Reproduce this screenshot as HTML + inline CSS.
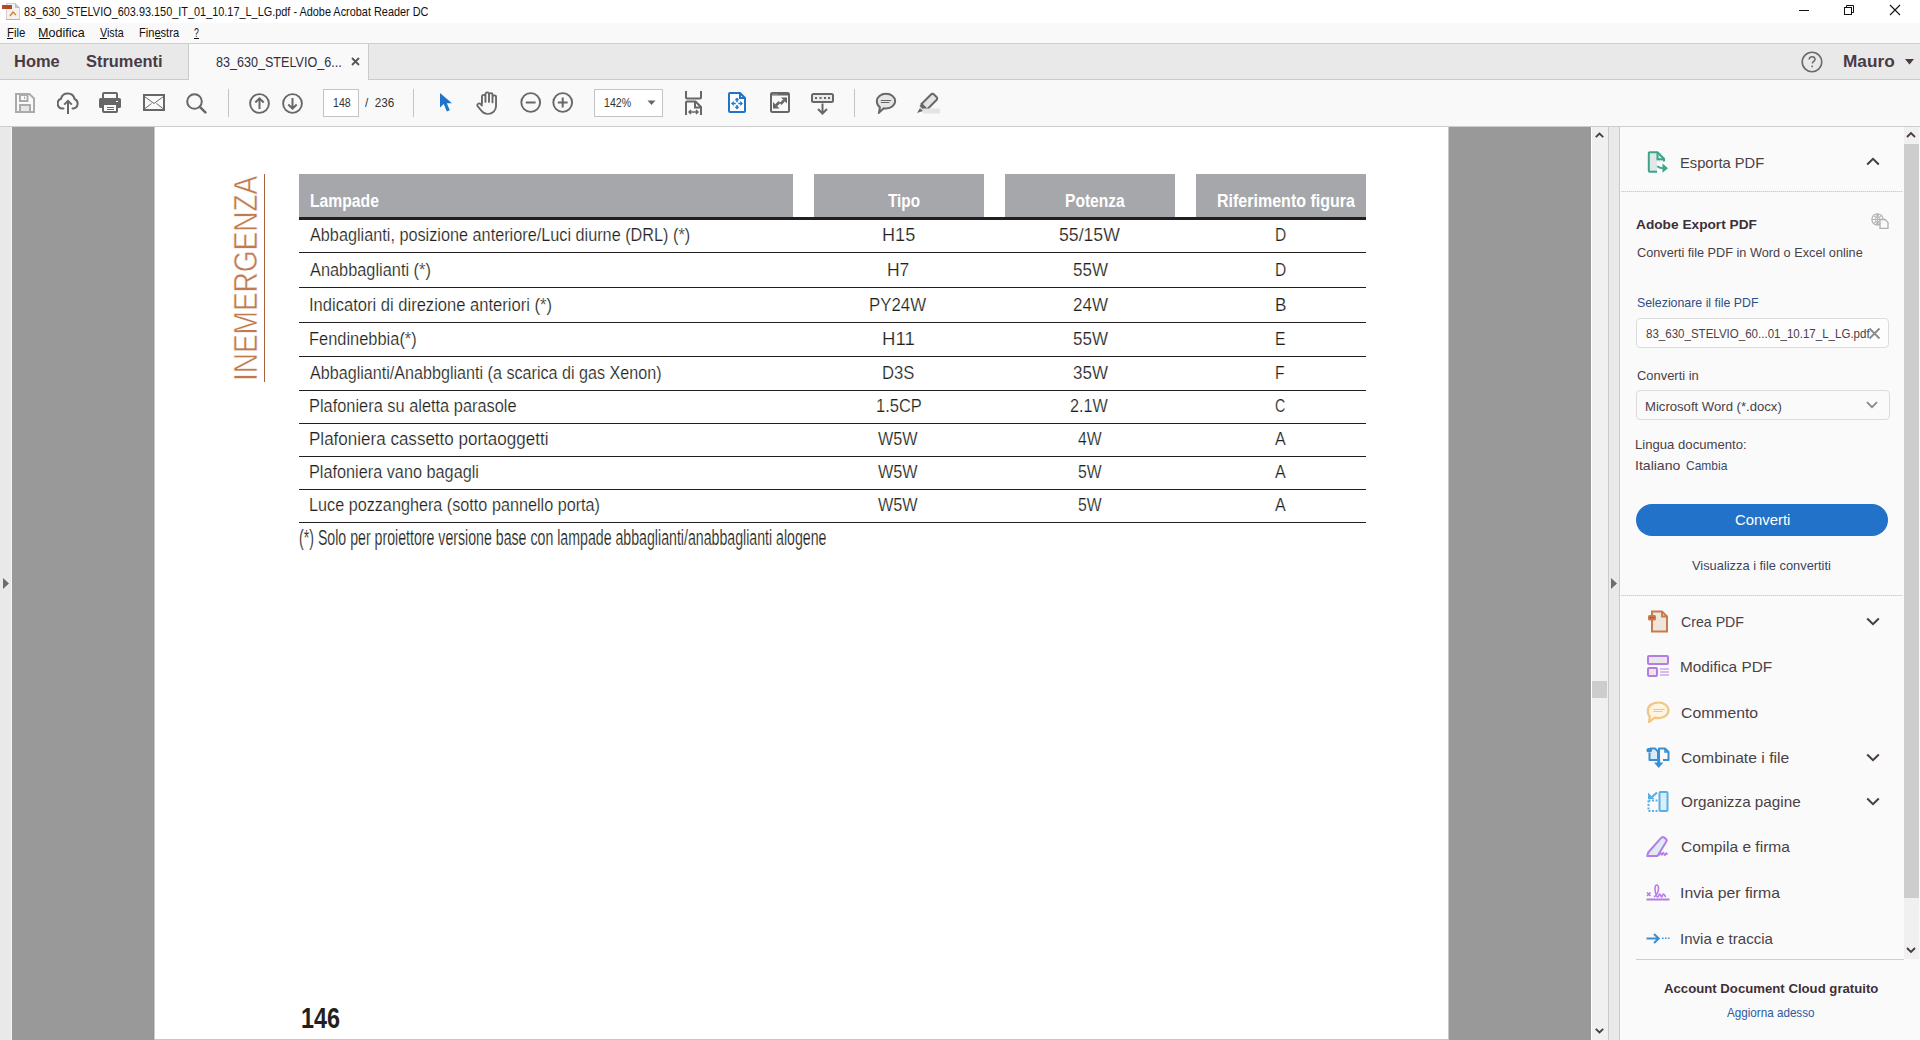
<!DOCTYPE html>
<html><head><meta charset="utf-8"><style>
html,body{margin:0;padding:0;width:1920px;height:1040px;overflow:hidden;background:#fff;position:relative}
.t{position:absolute;white-space:nowrap;line-height:1;transform-origin:0 0}
.r{position:absolute;display:block}
</style></head><body>
<div class="r" style="left:0px;top:0px;width:1920px;height:23px;background:#ffffff;"></div>
<svg class="r" style="left:2px;top:3px" width="18" height="17" viewBox="0 0 18 17"><path d="M4.5 0.5h9l4 4v12h-13z" fill="#f2f2f2" stroke="#d0d0d0"/><path d="M13.5 0.5v4h4" fill="#c8c8c8" stroke="#bdbdbd"/><rect x="0" y="2" width="10" height="4" fill="#b5482a"/><path d="M8 13 l3-4 l3 3" fill="none" stroke="#d9822b" stroke-width="1.4"/><rect x="4" y="16" width="14" height="1" fill="#b0b4bc"/></svg>
<div class="t" style="left:23.50px;top:6.00px;font-size:12.70px;color:#111;font-weight:normal;font-family:'Liberation Sans',sans-serif;transform:scale(0.8588,1.0000);">83_630_STELVIO_603.93.150_IT_01_10.17_L_LG.pdf - Adobe Acrobat Reader DC</div>
<div class="r" style="left:1799px;top:10px;width:10px;height:1px;background:#111;"></div>
<svg class="r" style="left:1843px;top:4px" width="12" height="12" viewBox="0 0 12 12"><rect x="1.5" y="3.5" width="7" height="7" fill="none" stroke="#111"/><path d="M3.5 3.5v-2h7v7h-2" fill="none" stroke="#111"/></svg>
<svg class="r" style="left:1889px;top:4px" width="12" height="12" viewBox="0 0 12 12"><path d="M1 1L11 11M11 1L1 11" stroke="#111" stroke-width="1.1"/></svg>
<div class="r" style="left:0px;top:23px;width:1920px;height:20px;background:#f9f9f9;"></div>
<div class="r" style="left:0px;top:43px;width:1920px;height:1px;background:#cdcdcd;"></div>
<div class="t" style="left:6.60px;top:27.00px;font-size:12.70px;color:#111;font-weight:normal;font-family:'Liberation Sans',sans-serif;transform:scale(0.9026,1.0000);">File</div>
<div class="r" style="left:7px;top:38px;width:6px;height:1px;background:#111;"></div>
<div class="t" style="left:38.01px;top:27.00px;font-size:12.70px;color:#111;font-weight:normal;font-family:'Liberation Sans',sans-serif;transform:scale(0.9876,1.0000);">Modifica</div>
<div class="r" style="left:39px;top:38px;width:11px;height:1px;background:#111;"></div>
<div class="t" style="left:100.00px;top:27.00px;font-size:12.70px;color:#111;font-weight:normal;font-family:'Liberation Sans',sans-serif;transform:scale(0.8437,1.0000);">Vista</div>
<div class="r" style="left:100px;top:38px;width:7px;height:1px;background:#111;"></div>
<div class="t" style="left:138.83px;top:27.00px;font-size:12.70px;color:#111;font-weight:normal;font-family:'Liberation Sans',sans-serif;transform:scale(0.8738,1.0000);">Finestra</div>
<div class="r" style="left:155px;top:38px;width:6px;height:1px;background:#111;"></div>
<div class="t" style="left:194.00px;top:27.00px;font-size:12.70px;color:#111;font-weight:normal;font-family:'Liberation Sans',sans-serif;transform:scale(0.6857,1.0000);">?</div>
<div class="r" style="left:194px;top:38px;width:5px;height:1px;background:#111;"></div>
<div class="r" style="left:0px;top:44px;width:1920px;height:35px;background:#e9e9e9;"></div>
<div class="r" style="left:0px;top:79px;width:1920px;height:1px;background:#cbcbcb;"></div>
<div class="r" style="left:188px;top:44px;width:1px;height:36px;background:#cbcbcb;"></div>
<div class="r" style="left:189px;top:44px;width:179px;height:36px;background:#f9f9f9;"></div>
<div class="r" style="left:368px;top:44px;width:1px;height:36px;background:#cbcbcb;"></div>
<div class="t" style="left:13.94px;top:54.00px;font-size:15.60px;color:#4a3a45;font-weight:bold;font-family:'Liberation Sans',sans-serif;transform:scale(1.0551,1.0000);">Home</div>
<div class="t" style="left:85.50px;top:54.00px;font-size:15.60px;color:#4a3a45;font-weight:bold;font-family:'Liberation Sans',sans-serif;transform:scale(1.0519,1.0000);">Strumenti</div>
<div class="t" style="left:215.60px;top:55.00px;font-size:14.80px;color:#2f2f3f;font-weight:normal;font-family:'Liberation Sans',sans-serif;transform:scale(0.8501,1.0000);">83_630_STELVIO_6...</div>
<svg class="r" style="left:351px;top:57px" width="9" height="9" viewBox="0 0 9 9"><path d="M1 1L8 8M8 1L1 8" stroke="#555" stroke-width="1.8"/></svg>
<svg class="r" style="left:1801px;top:51px" width="22" height="22" viewBox="0 0 22 22"><circle cx="11" cy="11" r="9.8" fill="none" stroke="#6a6a6a" stroke-width="1.6"/><path d="M8.2 8.6c0-1.7 1.3-2.8 2.9-2.8s2.9 1.1 2.9 2.6c0 1.9-2.6 2.1-2.6 4.1" fill="none" stroke="#6a6a6a" stroke-width="1.5"/><rect x="10.4" y="14.6" width="1.6" height="1.6" fill="#6a6a6a"/></svg>
<div class="t" style="left:1842.65px;top:54.00px;font-size:15.60px;color:#4a3a45;font-weight:bold;font-family:'Liberation Sans',sans-serif;transform:scale(1.1048,1.0000);">Mauro</div>
<svg class="r" style="left:1905px;top:59px" width="9" height="6" viewBox="0 0 9 6"><path d="M0 0h9l-4.5 5.5z" fill="#4a3a45"/></svg>
<div class="r" style="left:0px;top:80px;width:1920px;height:46px;background:#f9f9f9;"></div>
<div class="r" style="left:0px;top:126px;width:1920px;height:1px;background:#cdcdcd;"></div>
<svg class="r" style="left:15px;top:93px" width="20" height="20" viewBox="0 0 20 20"><path d="M1 1h13.5l4.5 4.5v13.5h-18z" fill="none" stroke="#ababab" stroke-width="2"/><rect x="5" y="2" width="7.5" height="6" fill="none" stroke="#ababab" stroke-width="2"/><rect x="9" y="3.5" width="1" height="2.5" fill="#ababab"/><rect x="5" y="12" width="10" height="7" fill="#e6e6e6" stroke="#ababab" stroke-width="2"/></svg>
<svg class="r" style="left:57px;top:92px" width="22" height="22" viewBox="0 0 22 22"><path d="M6.5 16.5h-1.2A5 5 0 0 1 4 6.8 A7 7 0 0 1 17.6 7 A5 5 0 0 1 16.6 16.5h-1.1" fill="none" stroke="#676767" stroke-width="2" stroke-linecap="round"/><path d="M11 22V9M7.2 12.6L11 8.8l3.8 3.8" fill="none" stroke="#676767" stroke-width="2"/></svg>
<svg class="r" style="left:99px;top:92px" width="22" height="21" viewBox="0 0 22 21"><rect x="4" y="1" width="14" height="6" rx="1" fill="none" stroke="#676767" stroke-width="2"/><rect x="0" y="6" width="22" height="10" rx="1.5" fill="#676767"/><rect x="4" y="12" width="14" height="8" rx="1" fill="#fff" stroke="#676767" stroke-width="2"/><rect x="8" y="15" width="7" height="1" fill="#676767"/><rect x="8" y="17" width="7" height="1" fill="#676767"/><rect x="17" y="9" width="2" height="1" fill="#fff"/></svg>
<svg class="r" style="left:143px;top:94px" width="22" height="17" viewBox="0 0 22 17"><rect x="1" y="1" width="20" height="15" fill="none" stroke="#676767" stroke-width="2"/><path d="M1.5 2.5l9.5 7 9.5-7M1.5 15l7-5.5M20.5 15l-7-5.5" fill="none" stroke="#676767" stroke-width="1"/></svg>
<svg class="r" style="left:186px;top:93px" width="21" height="21" viewBox="0 0 21 21"><circle cx="8.5" cy="8.5" r="7.3" fill="none" stroke="#676767" stroke-width="2"/><path d="M13.8 13.8l5.6 5.6" stroke="#676767" stroke-width="2.4" stroke-linecap="round"/></svg>
<div class="r" style="left:228px;top:89px;width:1px;height:28px;background:#c4c4c4;"></div>
<svg class="r" style="left:249px;top:93px" width="22" height="21" viewBox="0 0 22 21"><circle cx="10.5" cy="10.5" r="9.4" fill="none" stroke="#676767" stroke-width="1.9"/><path d="M10.5 16V5.5M6.3 9.5l4.2-4.2 4.2 4.2" fill="none" stroke="#676767" stroke-width="2"/></svg>
<svg class="r" style="left:282px;top:93px" width="21" height="21" viewBox="0 0 21 21"><circle cx="10.5" cy="10.5" r="9.4" fill="none" stroke="#676767" stroke-width="1.9"/><path d="M10.5 5v10.5M6.3 11.5l4.2 4.2 4.2-4.2" fill="none" stroke="#676767" stroke-width="2"/></svg>
<div class="r" style="left:323px;top:89px;width:36px;height:28px;background:#ffffff;box-sizing:border-box;border:1px solid #c4c4c4"></div>
<div class="t" style="left:332.50px;top:95.95px;font-size:13.00px;color:#333;font-weight:normal;font-family:'Liberation Sans',sans-serif;transform:scale(0.8155,1.0000);">148</div>
<div class="t" style="left:365.00px;top:95.95px;font-size:13.00px;color:#333;font-weight:normal;font-family:'Liberation Sans',sans-serif;transform:scale(0.8980,1.0000);">/&nbsp; 236</div>
<div class="r" style="left:413px;top:89px;width:1px;height:28px;background:#c4c4c4;"></div>
<svg class="r" style="left:439px;top:92px" width="14" height="21" viewBox="0 0 14 21"><path d="M1 1v14.5l3.8-3.5 3 7.5 3-1.3-3-7h5.2z" fill="#1f73c8"/></svg>
<svg class="r" style="left:476px;top:91px" width="24" height="24" viewBox="0 0 24 24"><g transform="translate(-1.2,0) scale(1.1,1)"><path d="M6.5 13V5.5a1.6 1.6 0 0 1 3.2 0V11M9.7 11V3a1.6 1.6 0 0 1 3.2 0v8M12.9 11V3.8a1.6 1.6 0 0 1 3.2 0V11.5M16.1 11.5V6a1.6 1.6 0 0 1 3.2 0v9c0 4.5-3 8-7.5 8-3 0-4.6-1.5-6-3.5L2.5 15a1.7 1.7 0 0 1 2.6-2.1l1.4 1.6" fill="none" stroke="#676767" stroke-width="1.7" stroke-linecap="round" stroke-linejoin="round"/></g></svg>
<svg class="r" style="left:520px;top:92px" width="22" height="21" viewBox="0 0 22 21"><circle cx="10.7" cy="10.5" r="9.4" fill="none" stroke="#676767" stroke-width="1.9"/><path d="M5.8 10.5h9.8" stroke="#676767" stroke-width="2"/></svg>
<svg class="r" style="left:552px;top:92px" width="22" height="21" viewBox="0 0 22 21"><circle cx="10.7" cy="10.5" r="9.4" fill="none" stroke="#676767" stroke-width="1.9"/><path d="M5.8 10.5h9.8M10.7 5.6v9.8" stroke="#676767" stroke-width="2"/></svg>
<div class="r" style="left:594px;top:89px;width:69px;height:28px;background:#ffffff;box-sizing:border-box;border:1px solid #c4c4c4"></div>
<div class="t" style="left:603.60px;top:95.95px;font-size:13.00px;color:#333;font-weight:normal;font-family:'Liberation Sans',sans-serif;transform:scale(0.8133,1.0000);">142%</div>
<svg class="r" style="left:647px;top:100px" width="9" height="6" viewBox="0 0 9 6"><path d="M0.5 0.5h8l-4 4.5z" fill="#676767"/></svg>
<svg class="r" style="left:684px;top:91px" width="19" height="25" viewBox="0 0 19 25"><path d="M2 0v6.5a1 1 0 0 0 1 1h13a1 1 0 0 0 1-1V0" fill="none" stroke="#676767" stroke-width="2"/><path d="M2 24V11.5a1 1 0 0 1 1-1h8.5l5.5 5.5v8" fill="none" stroke="#676767" stroke-width="2"/><path d="M11 11v5.5h5.5" fill="none" stroke="#676767" stroke-width="2"/><path d="M5 21h9M7 19l-2 2 2 2M12 19l2 2-2 2" fill="none" stroke="#676767" stroke-width="1.5"/></svg>
<svg class="r" style="left:728px;top:92px" width="18" height="21" viewBox="0 0 18 21"><path d="M2 1h10l5 5v13a1 1 0 0 1-1 1H2a1 1 0 0 1-1-1V2a1 1 0 0 1 1-1z" fill="#fff" stroke="#1f73c8" stroke-width="2"/><path d="M12 1v5h5" fill="none" stroke="#1f73c8" stroke-width="2"/><path d="M9 8v2.2M9 13v2.2M5.5 11.5h2.2M10.3 11.5h2.2" stroke="#1f73c8" stroke-width="1.5"/><path d="M9 5.5l-2.5 2.8h5zM9 17.5l-2.5-2.8h5zM3 11.5l2.8-2.5v5zM15 11.5l-2.8-2.5v5z" fill="#1f73c8"/></svg>
<svg class="r" style="left:770px;top:92px" width="20" height="21" viewBox="0 0 20 21"><rect x="1" y="1" width="18" height="19" rx="1.5" fill="none" stroke="#676767" stroke-width="2"/><rect x="1" y="1" width="18" height="2.5" fill="#676767"/><rect x="2.5" y="1.8" width="1" height="1" fill="#bbb"/><rect x="4.5" y="1.8" width="1" height="1" fill="#bbb"/><rect x="6.5" y="1.8" width="1" height="1" fill="#bbb"/><path d="M11 5.5h6v6zM3 10v6.5h6.5z" fill="#676767"/><path d="M14 8.5l-3.5 3.5M6 13.5l3.5-3.5" stroke="#676767" stroke-width="2.6"/></svg>
<svg class="r" style="left:811px;top:93px" width="23" height="22" viewBox="0 0 23 22"><rect x="1" y="1" width="21" height="8" rx="1.5" fill="#ebebeb" stroke="#676767" stroke-width="2"/><rect x="4" y="4" width="2" height="2" fill="#676767"/><rect x="8.5" y="4" width="2" height="2" fill="#676767"/><rect x="13" y="4" width="2" height="2" fill="#676767"/><rect x="17" y="4" width="2" height="2" fill="#676767"/><path d="M11.5 10.5v10M7 16l4.5 4.5L16 16" fill="none" stroke="#676767" stroke-width="2"/></svg>
<div class="r" style="left:854px;top:89px;width:1px;height:28px;background:#c4c4c4;"></div>
<svg class="r" style="left:875px;top:92px" width="22" height="22" viewBox="0 0 22 22"><path d="M11 1.8c5.2 0 9.2 3.2 9.2 7.3s-4 7.3-9.2 7.3c-0.8 0-1.5-0.1-2.2-0.2L4 20.6l0.9-5.3C2.9 14 1.8 11.8 1.8 9.1 1.8 5 5.8 1.8 11 1.8z" fill="#e8e6e4" stroke="#676767" stroke-width="2"/><path d="M5.8 8.5h10.4M5.8 10.5h8.6" stroke="#676767" stroke-width="1"/></svg>
<svg class="r" style="left:917px;top:92px" width="23" height="22" viewBox="0 0 23 22"><path d="M14 2.5a2 2 0 0 1 3 0l2.5 2.5a2 2 0 0 1 0 3L10 17.5l-5.5-5.5z" fill="#e6e4e2" stroke="#676767" stroke-width="2"/><path d="M4.5 12l5.5 5.5-2 2-5.5-5.5z" fill="#676767"/><path d="M0 21l3-5 3 3z" fill="#676767"/><rect x="6" y="16.5" width="17" height="5" fill="#e6e4e2"/></svg>
<div class="r" style="left:0px;top:127px;width:1920px;height:913px;background:#999999;"></div>
<div class="r" style="left:0px;top:127px;width:11px;height:913px;background:#e9e9e9;"></div>
<div class="r" style="left:11px;top:127px;width:1px;height:913px;background:#f5f5f5;"></div>
<svg class="r" style="left:3px;top:578px" width="6" height="11" viewBox="0 0 6 11"><path d="M0 0L6 5.5 0 11z" fill="#6c6c6c"/></svg>
<div class="r" style="left:154px;top:127px;width:1295px;height:912px;background:#ffffff;"></div>
<div class="r" style="left:154px;top:1039px;width:1295px;height:1px;background:#c6c6c6;"></div>
<div class="r" style="left:153px;top:127px;width:1px;height:913px;background:#959595;"></div>
<div class="r" style="left:154px;top:127px;width:1px;height:912px;background:#cbcbcb;"></div>
<div class="r" style="left:1448px;top:127px;width:1px;height:912px;background:#c8c8c8;"></div>
<div class="r" style="left:1591px;top:127px;width:1px;height:913px;background:#ffffff;"></div>
<div class="r" style="left:1592px;top:127px;width:16px;height:913px;background:#f0f0f0;"></div>
<div class="r" style="left:1608px;top:127px;width:1px;height:913px;background:#cacaca;"></div>
<div class="r" style="left:1609px;top:127px;width:10px;height:913px;background:#e9e9e9;"></div>
<div class="r" style="left:1619px;top:127px;width:1px;height:913px;background:#cacaca;"></div>
<div class="r" style="left:1592px;top:681px;width:15px;height:17px;background:#cdcdcd;"></div>
<svg class="r" style="left:1595px;top:132px" width="9" height="6" viewBox="0 0 9 6"><path d="M0.8 5.2L4.5 1.5 8.2 5.2" fill="none" stroke="#4a3a42" stroke-width="1.8"/></svg>
<svg class="r" style="left:1595px;top:1028px" width="9" height="6" viewBox="0 0 9 6"><path d="M0.8 0.8L4.5 4.5 8.2 0.8" fill="none" stroke="#4a3a42" stroke-width="1.8"/></svg>
<svg class="r" style="left:1611px;top:578px" width="6" height="11" viewBox="0 0 6 11"><path d="M0 0L6 5.5 0 11z" fill="#6c6c6c"/></svg>
<div class="r" style="left:1620px;top:127px;width:300px;height:913px;background:#fafafa;"></div>
<div class="r" style="left:299px;top:174px;width:494px;height:43px;background:#a6a7ab;"></div>
<div class="r" style="left:814px;top:174px;width:170px;height:43px;background:#a6a7ab;"></div>
<div class="r" style="left:1005px;top:174px;width:170px;height:43px;background:#a6a7ab;"></div>
<div class="r" style="left:1196px;top:174px;width:170px;height:43px;background:#a6a7ab;"></div>
<div class="r" style="left:299px;top:217px;width:1067px;height:3px;background:#231f20;"></div>
<div class="t" style="left:309.50px;top:193.00px;font-size:17.50px;color:#fff;font-weight:bold;font-family:'Liberation Sans',sans-serif;transform:scale(0.8963,1.0000);">Lampade</div>
<div class="t" style="left:888.40px;top:193.00px;font-size:17.50px;color:#fff;font-weight:bold;font-family:'Liberation Sans',sans-serif;transform:scale(0.8740,1.0000);">Tipo</div>
<div class="t" style="left:1064.71px;top:193.00px;font-size:17.50px;color:#fff;font-weight:bold;font-family:'Liberation Sans',sans-serif;transform:scale(0.8906,1.0000);">Potenza</div>
<div class="t" style="left:1216.78px;top:193.00px;font-size:17.50px;color:#fff;font-weight:bold;font-family:'Liberation Sans',sans-serif;transform:scale(0.9155,1.0000);">Riferimento figura</div>
<div class="r" style="left:299px;top:252px;width:1067px;height:1px;background:#231f20;"></div>
<div class="r" style="left:299px;top:287px;width:1067px;height:1px;background:#231f20;"></div>
<div class="r" style="left:299px;top:322px;width:1067px;height:1px;background:#231f20;"></div>
<div class="r" style="left:299px;top:356px;width:1067px;height:1px;background:#231f20;"></div>
<div class="r" style="left:299px;top:390px;width:1067px;height:1px;background:#231f20;"></div>
<div class="r" style="left:299px;top:423px;width:1067px;height:1px;background:#231f20;"></div>
<div class="r" style="left:299px;top:456px;width:1067px;height:1px;background:#231f20;"></div>
<div class="r" style="left:299px;top:489px;width:1067px;height:1px;background:#231f20;"></div>
<div class="r" style="left:299px;top:522px;width:1067px;height:1px;background:#231f20;"></div>
<div class="t" style="left:310.40px;top:227.00px;font-size:17.50px;color:#231f20;font-weight:normal;font-family:'Liberation Sans',sans-serif;transform:scale(0.9283,1.0000);-webkit-text-stroke:0.2px #fff;">Abbaglianti, posizione anteriore/Luci diurne (DRL) (*)</div>
<div class="t" style="left:882.27px;top:227.00px;font-size:17.50px;color:#231f20;font-weight:normal;font-family:'Liberation Sans',sans-serif;transform:scale(1.0339,1.0000);-webkit-text-stroke:0.2px #fff;">H15</div>
<div class="t" style="left:1059.00px;top:227.00px;font-size:17.50px;color:#231f20;font-weight:normal;font-family:'Liberation Sans',sans-serif;transform:scale(1.0083,1.0000);-webkit-text-stroke:0.2px #fff;">55/15W</div>
<div class="t" style="left:1275.11px;top:227.00px;font-size:17.50px;color:#231f20;font-weight:normal;font-family:'Liberation Sans',sans-serif;transform:scale(0.8909,1.0000);-webkit-text-stroke:0.2px #fff;">D</div>
<div class="t" style="left:310.40px;top:262.00px;font-size:17.50px;color:#231f20;font-weight:normal;font-family:'Liberation Sans',sans-serif;transform:scale(0.9342,1.0000);-webkit-text-stroke:0.2px #fff;">Anabbaglianti (*)</div>
<div class="t" style="left:887.00px;top:262.00px;font-size:17.50px;color:#231f20;font-weight:normal;font-family:'Liberation Sans',sans-serif;transform:scale(0.9982,1.0000);-webkit-text-stroke:0.2px #fff;">H7</div>
<div class="t" style="left:1072.60px;top:262.00px;font-size:17.50px;color:#231f20;font-weight:normal;font-family:'Liberation Sans',sans-serif;transform:scale(0.9708,1.0000);-webkit-text-stroke:0.2px #fff;">55W</div>
<div class="t" style="left:1275.11px;top:262.00px;font-size:17.50px;color:#231f20;font-weight:normal;font-family:'Liberation Sans',sans-serif;transform:scale(0.8909,1.0000);-webkit-text-stroke:0.2px #fff;">D</div>
<div class="t" style="left:309.45px;top:297.00px;font-size:17.50px;color:#231f20;font-weight:normal;font-family:'Liberation Sans',sans-serif;transform:scale(0.9460,1.0000);-webkit-text-stroke:0.2px #fff;">Indicatori di direzione anteriori (*)</div>
<div class="t" style="left:869.34px;top:297.00px;font-size:17.50px;color:#231f20;font-weight:normal;font-family:'Liberation Sans',sans-serif;transform:scale(0.9624,1.0000);-webkit-text-stroke:0.2px #fff;">PY24W</div>
<div class="t" style="left:1072.60px;top:297.00px;font-size:17.50px;color:#231f20;font-weight:normal;font-family:'Liberation Sans',sans-serif;transform:scale(0.9708,1.0000);-webkit-text-stroke:0.2px #fff;">24W</div>
<div class="t" style="left:1275.02px;top:297.00px;font-size:17.50px;color:#231f20;font-weight:normal;font-family:'Liberation Sans',sans-serif;transform:scale(0.9800,1.0000);-webkit-text-stroke:0.2px #fff;">B</div>
<div class="t" style="left:309.46px;top:331.00px;font-size:17.50px;color:#231f20;font-weight:normal;font-family:'Liberation Sans',sans-serif;transform:scale(0.9383,1.0000);-webkit-text-stroke:0.2px #fff;">Fendinebbia(*)</div>
<div class="t" style="left:882.34px;top:331.00px;font-size:17.50px;color:#231f20;font-weight:normal;font-family:'Liberation Sans',sans-serif;transform:scale(1.0629,1.0000);-webkit-text-stroke:0.2px #fff;">H11</div>
<div class="t" style="left:1072.60px;top:331.00px;font-size:17.50px;color:#231f20;font-weight:normal;font-family:'Liberation Sans',sans-serif;transform:scale(0.9708,1.0000);-webkit-text-stroke:0.2px #fff;">55W</div>
<div class="t" style="left:1275.10px;top:331.00px;font-size:17.50px;color:#231f20;font-weight:normal;font-family:'Liberation Sans',sans-serif;transform:scale(0.9000,1.0000);-webkit-text-stroke:0.2px #fff;">E</div>
<div class="t" style="left:310.40px;top:365.00px;font-size:17.50px;color:#231f20;font-weight:normal;font-family:'Liberation Sans',sans-serif;transform:scale(0.9219,1.0000);-webkit-text-stroke:0.2px #fff;">Abbaglianti/Anabbglianti (a scarica di gas Xenon)</div>
<div class="t" style="left:882.05px;top:365.00px;font-size:17.50px;color:#231f20;font-weight:normal;font-family:'Liberation Sans',sans-serif;transform:scale(0.9515,1.0000);-webkit-text-stroke:0.2px #fff;">D3S</div>
<div class="t" style="left:1072.60px;top:365.00px;font-size:17.50px;color:#231f20;font-weight:normal;font-family:'Liberation Sans',sans-serif;transform:scale(0.9708,1.0000);-webkit-text-stroke:0.2px #fff;">35W</div>
<div class="t" style="left:1275.11px;top:365.00px;font-size:17.50px;color:#231f20;font-weight:normal;font-family:'Liberation Sans',sans-serif;transform:scale(0.8889,1.0000);-webkit-text-stroke:0.2px #fff;">F</div>
<div class="t" style="left:309.46px;top:398.00px;font-size:17.50px;color:#231f20;font-weight:normal;font-family:'Liberation Sans',sans-serif;transform:scale(0.9360,1.0000);-webkit-text-stroke:0.2px #fff;">Plafoniera su aletta parasole</div>
<div class="t" style="left:876.26px;top:398.00px;font-size:17.50px;color:#231f20;font-weight:normal;font-family:'Liberation Sans',sans-serif;transform:scale(0.9411,1.0000);-webkit-text-stroke:0.2px #fff;">1.5CP</div>
<div class="t" style="left:1070.40px;top:398.00px;font-size:17.50px;color:#231f20;font-weight:normal;font-family:'Liberation Sans',sans-serif;transform:scale(0.9243,1.0000);-webkit-text-stroke:0.2px #fff;">2.1W</div>
<div class="t" style="left:1275.20px;top:398.00px;font-size:17.50px;color:#231f20;font-weight:normal;font-family:'Liberation Sans',sans-serif;transform:scale(0.8167,1.0000);-webkit-text-stroke:0.2px #fff;">C</div>
<div class="t" style="left:309.43px;top:431.00px;font-size:17.50px;color:#231f20;font-weight:normal;font-family:'Liberation Sans',sans-serif;transform:scale(0.9728,1.0000);-webkit-text-stroke:0.2px #fff;">Plafoniera cassetto portaoggetti</div>
<div class="t" style="left:878.30px;top:431.00px;font-size:17.50px;color:#231f20;font-weight:normal;font-family:'Liberation Sans',sans-serif;transform:scale(0.9272,1.0000);-webkit-text-stroke:0.2px #fff;">W5W</div>
<div class="t" style="left:1077.70px;top:431.00px;font-size:17.50px;color:#231f20;font-weight:normal;font-family:'Liberation Sans',sans-serif;transform:scale(0.9015,1.0000);-webkit-text-stroke:0.2px #fff;">4W</div>
<div class="t" style="left:1274.80px;top:431.00px;font-size:17.50px;color:#231f20;font-weight:normal;font-family:'Liberation Sans',sans-serif;transform:scale(0.9167,1.0000);-webkit-text-stroke:0.2px #fff;">A</div>
<div class="t" style="left:309.47px;top:464.00px;font-size:17.50px;color:#231f20;font-weight:normal;font-family:'Liberation Sans',sans-serif;transform:scale(0.9292,1.0000);-webkit-text-stroke:0.2px #fff;">Plafoniera vano bagagli</div>
<div class="t" style="left:878.30px;top:464.00px;font-size:17.50px;color:#231f20;font-weight:normal;font-family:'Liberation Sans',sans-serif;transform:scale(0.9272,1.0000);-webkit-text-stroke:0.2px #fff;">W5W</div>
<div class="t" style="left:1077.70px;top:464.00px;font-size:17.50px;color:#231f20;font-weight:normal;font-family:'Liberation Sans',sans-serif;transform:scale(0.9015,1.0000);-webkit-text-stroke:0.2px #fff;">5W</div>
<div class="t" style="left:1274.80px;top:464.00px;font-size:17.50px;color:#231f20;font-weight:normal;font-family:'Liberation Sans',sans-serif;transform:scale(0.9167,1.0000);-webkit-text-stroke:0.2px #fff;">A</div>
<div class="t" style="left:309.47px;top:497.00px;font-size:17.50px;color:#231f20;font-weight:normal;font-family:'Liberation Sans',sans-serif;transform:scale(0.9260,1.0000);-webkit-text-stroke:0.2px #fff;">Luce pozzanghera (sotto pannello porta)</div>
<div class="t" style="left:878.30px;top:497.00px;font-size:17.50px;color:#231f20;font-weight:normal;font-family:'Liberation Sans',sans-serif;transform:scale(0.9272,1.0000);-webkit-text-stroke:0.2px #fff;">W5W</div>
<div class="t" style="left:1077.70px;top:497.00px;font-size:17.50px;color:#231f20;font-weight:normal;font-family:'Liberation Sans',sans-serif;transform:scale(0.9015,1.0000);-webkit-text-stroke:0.2px #fff;">5W</div>
<div class="t" style="left:1274.80px;top:497.00px;font-size:17.50px;color:#231f20;font-weight:normal;font-family:'Liberation Sans',sans-serif;transform:scale(0.9167,1.0000);-webkit-text-stroke:0.2px #fff;">A</div>
<div class="t" style="left:298.73px;top:527.00px;font-size:21.20px;color:#231f20;font-weight:normal;font-family:'Liberation Sans',sans-serif;transform:scale(0.6684,1.0000);-webkit-text-stroke:0.2px #fff;">(*) Solo per proiettore versione base con lampade abbaglianti/anabbaglianti alogene</div>
<div class="t" style="left:233.5px;top:379px;width:0;height:0"><div style="position:absolute;left:0;top:0;transform-origin:0 0;transform:rotate(-90deg)">
<div class="t" style="left:-1.73px;top:-4.00px;font-size:32.30px;color:#c07a50;font-weight:normal;font-family:'Liberation Sans',sans-serif;transform:scale(0.8660,1.0000);-webkit-text-stroke:0.5px #fff;">INEMERGENZA</div>
</div></div>
<div class="r" style="left:264px;top:174px;width:1px;height:208px;background:#a8603f;"></div>
<div class="t" style="left:301.48px;top:1004.00px;font-size:28.60px;color:#231f20;font-weight:bold;font-family:'Liberation Sans',sans-serif;transform:scale(0.8187,1.0000);">146</div>
<svg class="r" style="left:1647px;top:151px" width="22" height="22" viewBox="0 0 22 22"><path d="M2.8 1.2H10.5L17 7.7V10.5H10V14.5L10 20.8H2.8a1 1 0 0 1-1-1V2.2a1 1 0 0 1 1-1z" fill="#e2e6e6"/><path d="M10 20.8H2.8a1 1 0 0 1-1-1V2.2a1 1 0 0 1 1-1H10.5L17 7.7V10.5" fill="none" stroke="#3aa58a" stroke-width="2"/><path d="M10.5 1.5V8.2H17" fill="none" stroke="#3aa58a" stroke-width="2"/><path d="M10.3 15.2c1.2 1.4 2.6 2 5.5 2" fill="none" stroke="#3aa58a" stroke-width="2"/><path d="M15.5 12.6L21 17.2 15.5 21.8z" fill="#3aa58a"/></svg>
<div class="t" style="left:1679.52px;top:155.00px;font-size:15.00px;color:#4a4147;font-weight:normal;font-family:'Liberation Sans',sans-serif;transform:scale(0.9811,1.0000);">Esporta PDF</div>
<svg class="r" style="left:1866px;top:157px" width="14" height="9" viewBox="0 0 14 9"><path d="M1.2 7.5L7 1.8l5.8 5.7" fill="none" stroke="#4a3a42" stroke-width="2"/></svg>
<div class="r" style="left:1621px;top:191px;width:282px;height:1px;background:repeating-linear-gradient(90deg,#cdcdcd 0 1px,#e6e6e6 1px 2px)"></div>
<div class="t" style="left:1636.00px;top:218.00px;font-size:13.00px;color:#3f2f38;font-weight:bold;font-family:'Liberation Sans',sans-serif;transform:scale(1.0531,1.0000);">Adobe Export PDF</div>
<svg class="r" style="left:1871px;top:213px" width="18" height="16" viewBox="0 0 18 16"><circle cx="6.5" cy="6.5" r="5.6" fill="none" stroke="#b0b0b0" stroke-width="1.2"/><path d="M1 6.5h11M6.5 1v11M3 3.5c2 1 5 1 7 0M3 9.5c2-1 5-1 7 0M6.5 1c-2.5 3-2.5 8 0 11M6.5 1c2.5 3 2.5 8 0 11" fill="none" stroke="#b0b0b0" stroke-width="0.9"/><path d="M9 6.5h5l3 3v6h-8z" fill="#fafafa" stroke="#b0b0b0" stroke-width="1.3"/></svg>
<div class="t" style="left:1636.50px;top:246.00px;font-size:13.00px;color:#4a4147;font-weight:normal;font-family:'Liberation Sans',sans-serif;transform:scale(0.9773,1.0000);">Converti file PDF in Word o Excel online</div>
<div class="t" style="left:1636.50px;top:296.00px;font-size:13.00px;color:#2f4f85;font-weight:normal;font-family:'Liberation Sans',sans-serif;transform:scale(0.9496,1.0000);">Selezionare il file PDF</div>
<div class="r" style="left:1636px;top:318px;width:253px;height:30px;background:#fdfdfd;box-sizing:border-box;border:1px solid #dcdcdc;border-radius:4px"></div>
<div class="t" style="left:1646.00px;top:327.00px;font-size:13.00px;color:#4a4147;font-weight:normal;font-family:'Liberation Sans',sans-serif;transform:scale(0.8875,1.0000);">83_630_STELVIO_60...01_10.17_L_LG.pdf</div>
<svg class="r" style="left:1868px;top:327px" width="13" height="13" viewBox="0 0 13 13"><path d="M1.5 1.5l10 10M11.5 1.5l-10 10" stroke="#8a8a8a" stroke-width="1.8"/></svg>
<div class="t" style="left:1636.50px;top:369.00px;font-size:13.00px;color:#4a4147;font-weight:normal;font-family:'Liberation Sans',sans-serif;transform:scale(0.9934,1.0000);">Converti in</div>
<div class="r" style="left:1636px;top:390px;width:254px;height:30px;background:#fafafa;box-sizing:border-box;border:1px solid #dcdcdc;border-radius:4px"></div>
<div class="t" style="left:1645.49px;top:400.00px;font-size:13.00px;color:#4a4147;font-weight:normal;font-family:'Liberation Sans',sans-serif;transform:scale(1.0087,1.0000);">Microsoft Word (*.docx)</div>
<svg class="r" style="left:1866px;top:401px" width="12" height="8" viewBox="0 0 12 8"><path d="M1 1.2l5 5 5-5" fill="none" stroke="#8a8a8a" stroke-width="1.8"/></svg>
<div class="t" style="left:1635.49px;top:438.00px;font-size:13.00px;color:#4a4147;font-weight:normal;font-family:'Liberation Sans',sans-serif;transform:scale(1.0094,1.0000);">Lingua documento:</div>
<div class="t" style="left:1635.42px;top:459.00px;font-size:13.00px;color:#4a4147;font-weight:normal;font-family:'Liberation Sans',sans-serif;transform:scale(1.0813,1.0000);">Italiano</div>
<div class="t" style="left:1686.00px;top:459.00px;font-size:13.00px;color:#3a4a70;font-weight:normal;font-family:'Liberation Sans',sans-serif;transform:scale(0.9218,1.0000);">Cambia</div>
<div class="r" style="left:1636px;top:504px;width:252px;height:32px;background:#2172c8;border-radius:16px"></div>
<div class="t" style="left:1734.60px;top:513.00px;font-size:14.20px;color:#ffffff;font-weight:normal;font-family:'Liberation Sans',sans-serif;transform:scale(1.0479,1.0000);">Converti</div>
<div class="t" style="left:1692.30px;top:559.00px;font-size:13.00px;color:#3a4560;font-weight:normal;font-family:'Liberation Sans',sans-serif;transform:scale(0.9875,1.0000);">Visualizza i file convertiti</div>
<div class="r" style="left:1621px;top:595px;width:282px;height:1px;background:repeating-linear-gradient(90deg,#cdcdcd 0 1px,#e6e6e6 1px 2px)"></div>
<div class="t" style="left:1680.70px;top:614.00px;font-size:15.00px;color:#4a4147;font-weight:normal;font-family:'Liberation Sans',sans-serif;transform:scale(0.9441,1.0000);">Crea PDF</div>
<svg class="r" style="left:1866px;top:617px" width="14" height="9" viewBox="0 0 14 9"><path d="M1.2 1.5L7 7.2l5.8-5.7" fill="none" stroke="#4a3a42" stroke-width="2"/></svg>
<div class="t" style="left:1679.68px;top:659.00px;font-size:15.00px;color:#4a4147;font-weight:normal;font-family:'Liberation Sans',sans-serif;transform:scale(1.0230,1.0000);">Modifica PDF</div>
<div class="t" style="left:1680.70px;top:705.00px;font-size:15.00px;color:#4a4147;font-weight:normal;font-family:'Liberation Sans',sans-serif;transform:scale(1.0504,1.0000);">Commento</div>
<div class="t" style="left:1680.70px;top:750.00px;font-size:15.00px;color:#4a4147;font-weight:normal;font-family:'Liberation Sans',sans-serif;transform:scale(1.0472,1.0000);">Combinate i file</div>
<svg class="r" style="left:1866px;top:753px" width="14" height="9" viewBox="0 0 14 9"><path d="M1.2 1.5L7 7.2l5.8-5.7" fill="none" stroke="#4a3a42" stroke-width="2"/></svg>
<div class="t" style="left:1680.70px;top:794.00px;font-size:15.00px;color:#4a4147;font-weight:normal;font-family:'Liberation Sans',sans-serif;transform:scale(1.0185,1.0000);">Organizza pagine</div>
<svg class="r" style="left:1866px;top:797px" width="14" height="9" viewBox="0 0 14 9"><path d="M1.2 1.5L7 7.2l5.8-5.7" fill="none" stroke="#4a3a42" stroke-width="2"/></svg>
<div class="t" style="left:1680.70px;top:839.00px;font-size:15.00px;color:#4a4147;font-weight:normal;font-family:'Liberation Sans',sans-serif;transform:scale(1.0370,1.0000);">Compila e firma</div>
<div class="t" style="left:1679.65px;top:885.00px;font-size:15.00px;color:#4a4147;font-weight:normal;font-family:'Liberation Sans',sans-serif;transform:scale(1.0519,1.0000);">Invia per firma</div>
<div class="t" style="left:1679.70px;top:931.00px;font-size:15.00px;color:#4a4147;font-weight:normal;font-family:'Liberation Sans',sans-serif;transform:scale(1.0043,1.0000);">Invia e traccia</div>
<svg class="r" style="left:1647px;top:610px" width="22" height="23" viewBox="0 0 22 23"><path d="M5 1.5h10l5 5v15h-15z" fill="#ece6dc" stroke="#c97a4a" stroke-width="2"/><path d="M15 1.5v5h5" fill="none" stroke="#c97a4a" stroke-width="1.8"/><rect x="1" y="5" width="8" height="5.5" rx="1.5" fill="#c97a4a"/><rect x="3" y="7" width="1.2" height="1.2" fill="#8a3a20"/><rect x="5.5" y="7" width="1.2" height="1.2" fill="#8a3a20"/></svg>
<svg class="r" style="left:1647px;top:655px" width="22" height="22" viewBox="0 0 22 22"><rect x="1" y="1" width="20" height="8" rx="1" fill="#e8e8e8" stroke="#b57ce6" stroke-width="2"/><rect x="1" y="13" width="9" height="8" rx="1" fill="#e8e8e8" stroke="#b57ce6" stroke-width="2"/><path d="M13 14h9M13 17h9M13 20h9" stroke="#b57ce6" stroke-width="1.2"/></svg>
<svg class="r" style="left:1646px;top:701px" width="24" height="22" viewBox="0 0 24 22"><path d="M12.5 1.5c5.5 0 10 3.4 10 7.8s-4.5 7.8-10 7.8c-1.3 0-2.6-0.2-3.7-0.5L3 21l0.8-5.3C2.300 14.300 1.8 12 1.8 9.300 1.8 4.900 6.5 1.5 12.5 1.5z" fill="#fdf5df" stroke="#f0c585" stroke-width="2.2"/><path d="M7.5 8.5h11M7.5 10.5h9" stroke="#f0c585" stroke-width="1"/></svg>
<svg class="r" style="left:1646px;top:746px" width="24" height="23" viewBox="0 0 24 23"><path d="M4 2.5h5l3 3v8.5H3.5V7" fill="#dbeaf6" stroke="#3a8fd0" stroke-width="2" stroke-linejoin="round"/><rect x="0.5" y="2" width="5.5" height="4.5" rx="2" fill="#3a8fd0"/><path d="M13 14V2.5h6l3.5 3.5v8H17" fill="none" stroke="#3a8fd0" stroke-width="2" stroke-linejoin="round"/><path d="M19 2.5V6h3.5" fill="none" stroke="#3a8fd0" stroke-width="1.6"/><path d="M12.7 13v5" stroke="#3a8fd0" stroke-width="3"/><path d="M8 16.5h9.5l-4.8 5.5z" fill="#3a8fd0"/></svg>
<svg class="r" style="left:1647px;top:791px" width="22" height="21" viewBox="0 0 22 21"><rect x="12.5" y="1" width="8" height="19" rx="1" fill="#d9eefb" stroke="#5aaee6" stroke-width="2"/><path d="M1.5 9.5v10.5h9M1.5 9.5h9" fill="none" stroke="#5aaee6" stroke-width="2" stroke-dasharray="2 1.5"/><path d="M10 1.5L5 6" stroke="#5aaee6" stroke-width="2.2"/><path d="M1 1.5v6.5h6.5z" fill="#5aaee6"/></svg>
<svg class="r" style="left:1646px;top:835px" width="24" height="22" viewBox="0 0 24 22"><path d="M1.2 21H11.5L20.2 6.8a2.4 2.4 0 0 0-0.6-3.2l-1.4-1a2.4 2.4 0 0 0-3.3 0.5L2.2 17.5z" fill="#dcecf4" stroke="#b57ce6" stroke-width="2" stroke-linejoin="round"/><path d="M13 20.5c0.6-3 1.6-3.5 2-2 0.4 1.8 1.2 1.8 1.6 0.2 0.4-1.4 1.2-1.4 1.5 0.2 0.3 1.6 1.4 1.6 1.7 0 0.3-1.2 1.3-1 1.3 0.8" fill="none" stroke="#b57ce6" stroke-width="1.6"/></svg>
<svg class="r" style="left:1646px;top:883px" width="24" height="18" viewBox="0 0 24 18"><path d="M1 9.5l3.5 3.5M4.5 9.5L1 13" stroke="#b57ce6" stroke-width="1.6"/><path d="M8 14c1.5-1 4-4 4.5-7.5 0.3-2.5-0.5-4.5-1.8-4.5s-2 2-1.6 5c0.4 3.2 1.6 7 2.6 7s1.2-3 2-3 1 3 1.8 3 1-3 2-3 1 2.5 2.5 2.5" fill="none" stroke="#b57ce6" stroke-width="1.6"/><path d="M0.5 16.5h23" stroke="#b57ce6" stroke-width="2"/></svg>
<svg class="r" style="left:1646px;top:933px" width="24" height="11" viewBox="0 0 24 11"><path d="M0.5 5.5h12M8 1l4.8 4.5L8 10" fill="none" stroke="#3a8fd0" stroke-width="2"/><rect x="16" y="4.5" width="1.5" height="1.5" fill="#3a8fd0"/><rect x="19" y="4.5" width="1.5" height="1.5" fill="#3a8fd0"/><rect x="22" y="4.5" width="1.5" height="1.5" fill="#3a8fd0"/></svg>
<div class="r" style="left:1904px;top:127px;width:15px;height:832px;background:#f0f0f0;"></div>
<div class="r" style="left:1904px;top:144px;width:15px;height:754px;background:#cdcdcd;"></div>
<svg class="r" style="left:1906px;top:131px" width="10" height="7" viewBox="0 0 10 7"><path d="M1 6L5 2l4 4" fill="none" stroke="#4a3a42" stroke-width="1.8"/></svg>
<svg class="r" style="left:1906px;top:947px" width="10" height="7" viewBox="0 0 10 7"><path d="M1 1l4 4 4-4" fill="none" stroke="#4a3a42" stroke-width="1.8"/></svg>
<div class="r" style="left:1636px;top:959px;width:268px;height:1px;background:#cfcfcf;"></div>
<div class="t" style="left:1663.60px;top:982.00px;font-size:13.00px;color:#3f2f38;font-weight:bold;font-family:'Liberation Sans',sans-serif;transform:scale(1.0130,1.0000);">Account Document Cloud gratuito</div>
<div class="t" style="left:1726.50px;top:1006.00px;font-size:13.00px;color:#2d5aa0;font-weight:normal;font-family:'Liberation Sans',sans-serif;transform:scale(0.8969,1.0000);">Aggiorna adesso</div>
</body></html>
